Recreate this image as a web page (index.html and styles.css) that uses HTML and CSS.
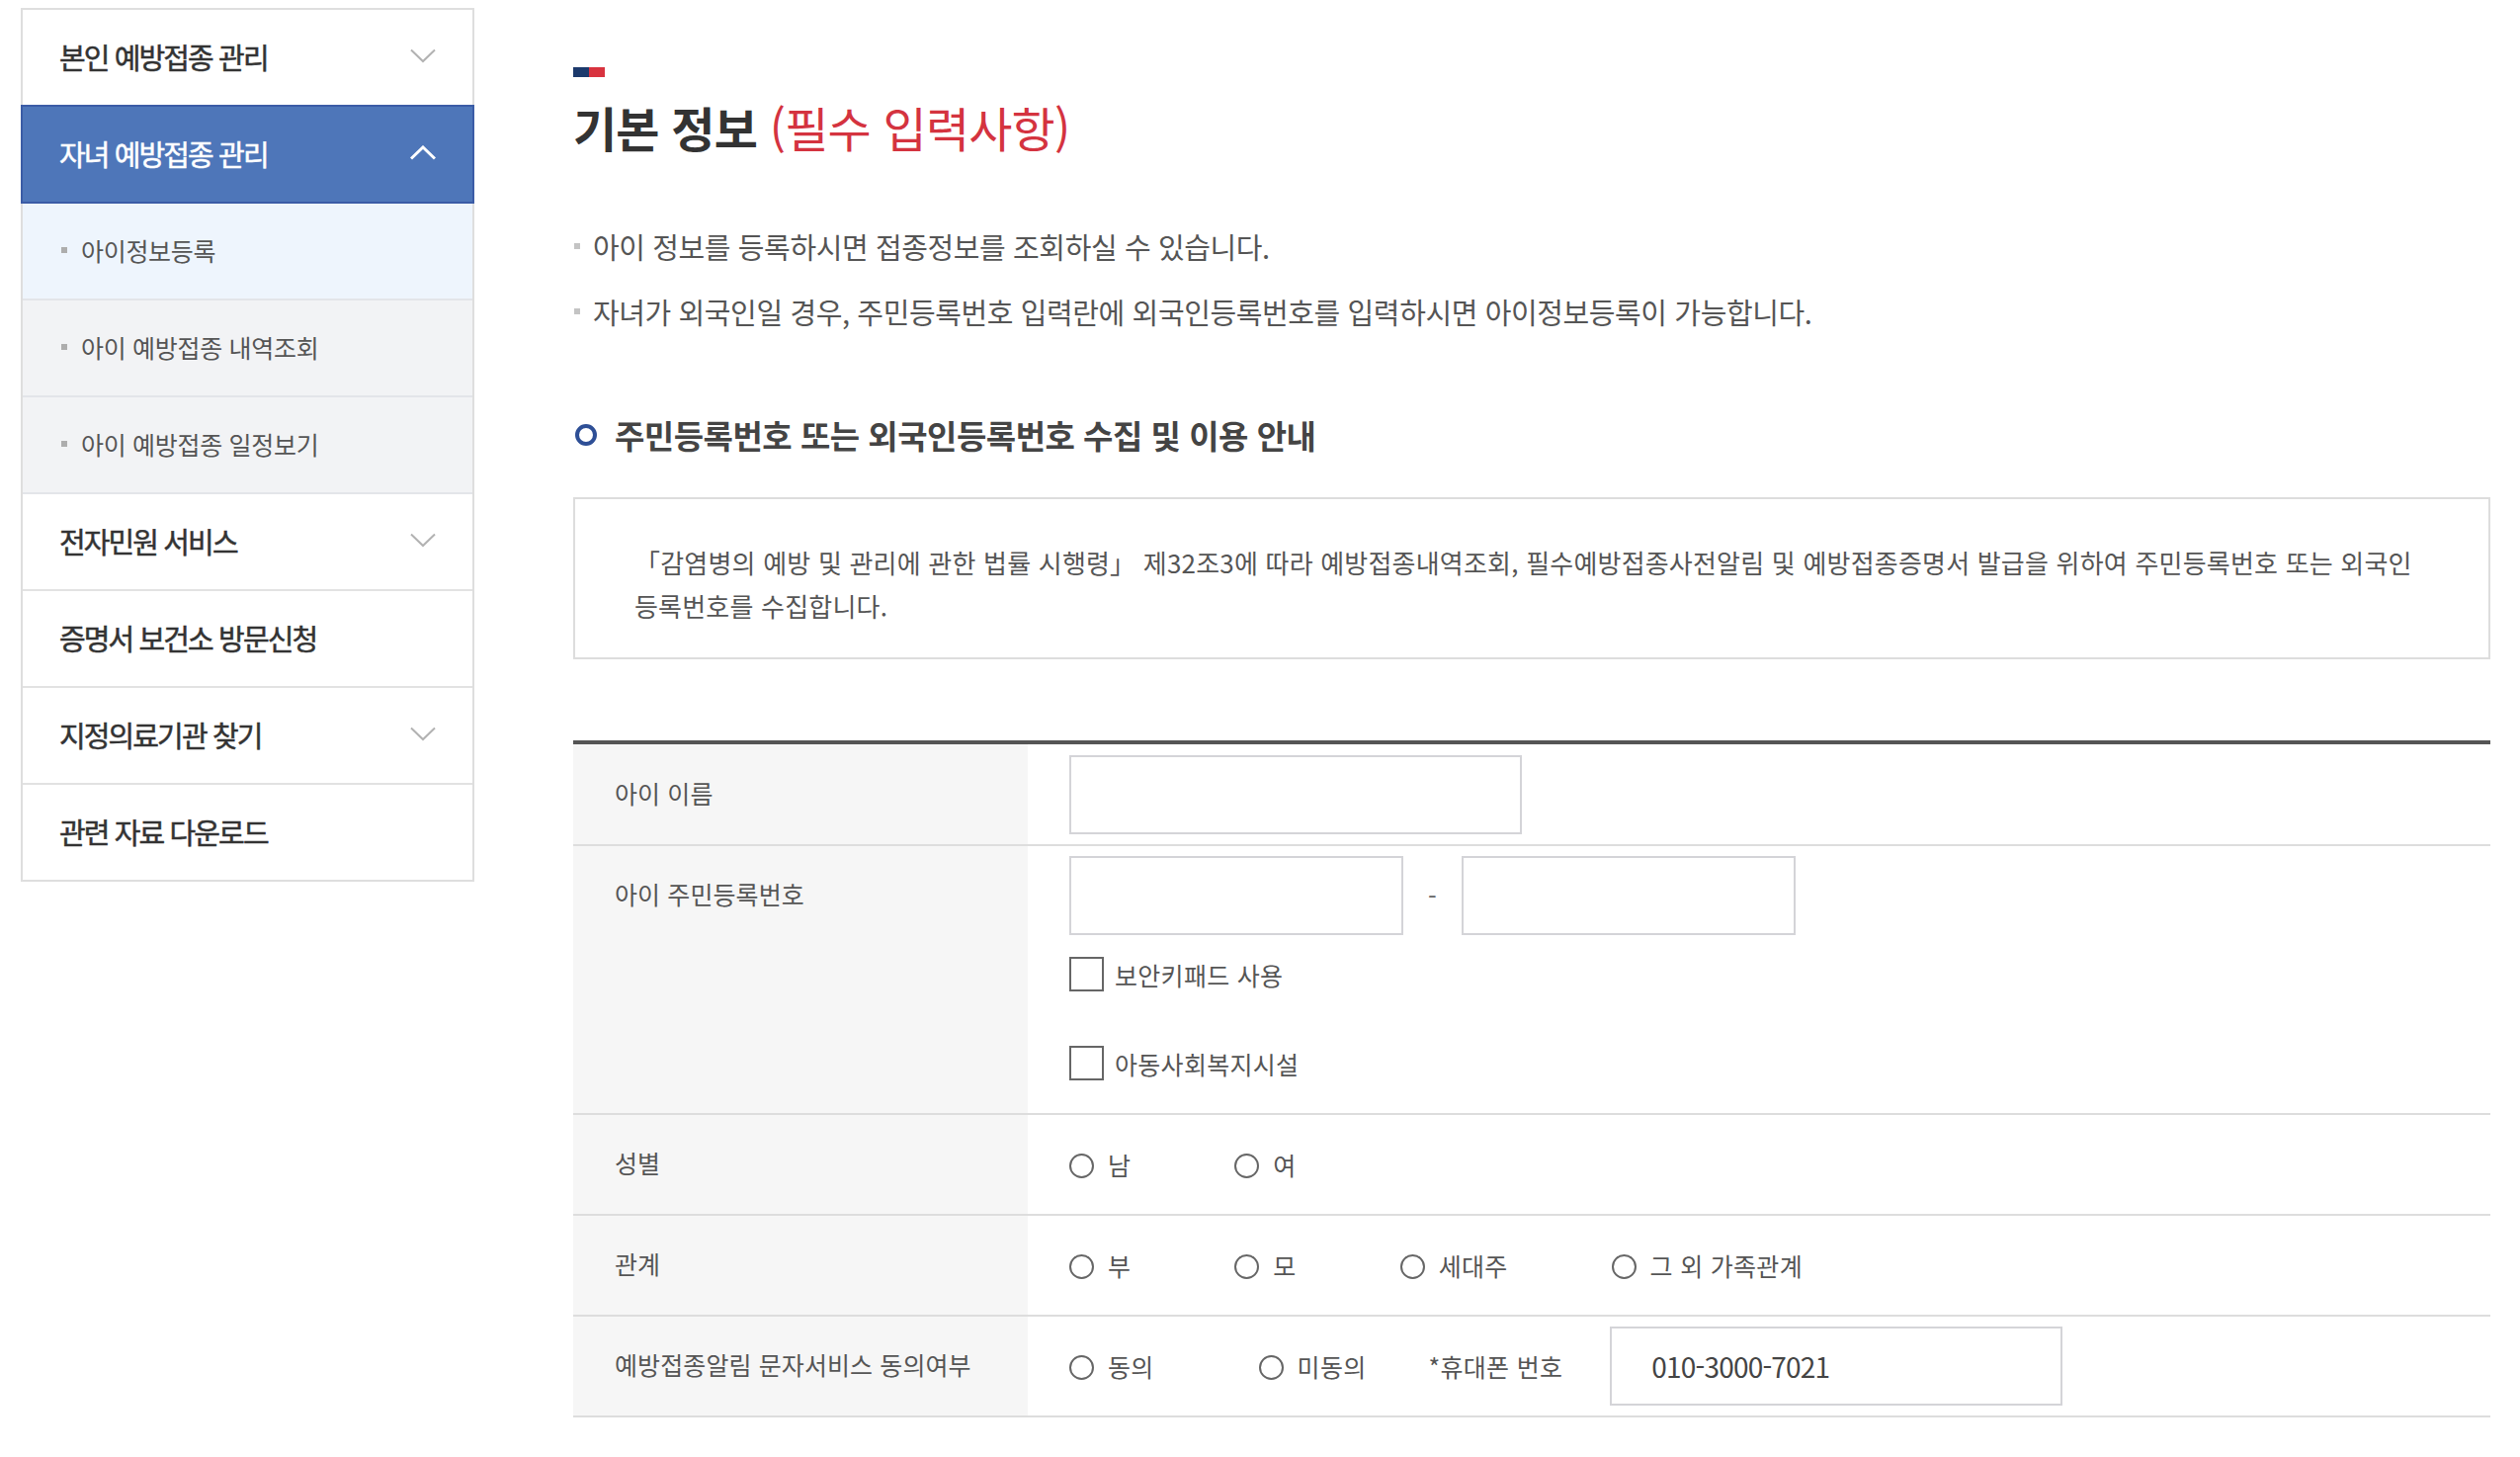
FILE: index.html
```html
<!DOCTYPE html>
<html lang="ko">
<head>
<meta charset="utf-8">
<title>기본 정보</title>
<link rel="stylesheet" href="styles.css">
</head>
<body>
<div class="page">
  <nav class="snb">
    <ul class="snb-list">
      <li class="snb-item">
        <a class="snb-row">본인 예방접종 관리<svg class="chev" viewBox="0 0 26 15"><polyline points="1,1.5 13,13 25,1.5"/></svg></a>
      </li>
      <li class="snb-item">
        <a class="snb-row is-active">자녀 예방접종 관리<svg class="chev chev-up" viewBox="0 0 26 15"><polyline points="1,13.5 13,2 25,13.5"/></svg></a>
        <ul class="snb-sub">
          <li class="is-current">아이정보등록</li>
          <li>아이 예방접종 내역조회</li>
          <li>아이 예방접종 일정보기</li>
        </ul>
      </li>
      <li class="snb-item">
        <a class="snb-row">전자민원 서비스<svg class="chev" viewBox="0 0 26 15"><polyline points="1,1.5 13,13 25,1.5"/></svg></a>
      </li>
      <li class="snb-item">
        <a class="snb-row">증명서 보건소 방문신청</a>
      </li>
      <li class="snb-item">
        <a class="snb-row">지정의료기관 찾기<svg class="chev" viewBox="0 0 26 15"><polyline points="1,1.5 13,13 25,1.5"/></svg></a>
      </li>
      <li class="snb-item">
        <a class="snb-row">관련 자료 다운로드</a>
      </li>
    </ul>
  </nav>

  <main class="content">
    <div class="title-bar"><span></span><span></span></div>
    <h2 class="page-title">기본 정보 <span class="req">(필수 입력사항)</span></h2>

    <ul class="notice">
      <li>아이 정보를 등록하시면 접종정보를 조회하실 수 있습니다.</li>
      <li>자녀가 외국인일 경우, 주민등록번호 입력란에 외국인등록번호를 입력하시면 아이정보등록이 가능합니다.</li>
    </ul>

    <h3 class="sec-title">주민등록번호 또는 외국인등록번호 수집 및 이용 안내</h3>

    <div class="info-box">
      <p>「감염병의 예방 및 관리에 관한 법률 시행령」 제32조3에 따라 예방접종내역조회, 필수예방접종사전알림 및 예방접종증명서 발급을 위하여 주민등록번호 또는 외국인<br>등록번호를 수집합니다.</p>
    </div>

    <div class="form-table">
      <div class="form-row">
        <div class="form-th">아이 이름</div>
        <div class="form-td form-td-first"><input class="inp" type="text" title="아이 이름"></div>
      </div>

      <div class="form-row">
        <div class="form-th form-th-top">아이 주민등록번호</div>
        <div class="form-td form-td-stack">
          <div class="rrn">
            <input class="inp inp-rrn" type="text" title="주민등록번호 앞자리">
            <span class="dash">-</span>
            <input class="inp inp-rrn" type="text" title="주민등록번호 뒷자리">
          </div>
          <label class="chk-line chk-first"><input class="chk" type="checkbox">보안키패드 사용</label>
          <label class="chk-line chk-second"><input class="chk" type="checkbox">아동사회복지시설</label>
        </div>
      </div>

      <div class="form-row">
        <div class="form-th">성별</div>
        <div class="form-td">
          <label class="rd-item"><input class="rd" type="radio" name="sex">남</label>
          <label class="rd-item"><input class="rd" type="radio" name="sex">여</label>
        </div>
      </div>

      <div class="form-row">
        <div class="form-th">관계</div>
        <div class="form-td">
          <label class="rd-item"><input class="rd" type="radio" name="rel">부</label>
          <label class="rd-item"><input class="rd" type="radio" name="rel">모</label>
          <label class="rd-item"><input class="rd" type="radio" name="rel">세대주</label>
          <label class="rd-item"><input class="rd" type="radio" name="rel">그 외 가족관계</label>
        </div>
      </div>

      <div class="form-row">
        <div class="form-th">예방접종알림 문자서비스 동의여부</div>
        <div class="form-td">
          <label class="rd-item rd-wide"><input class="rd" type="radio" name="sms">동의</label>
          <label class="rd-item rd-last"><input class="rd" type="radio" name="sms">미동의</label>
          <span class="phone-label">*휴대폰 번호</span>
          <input class="inp inp-phone" type="text" value="010-3000-7021" title="휴대폰 번호">
        </div>
      </div>
    </div>
  </main>
</div>
</body>
</html>
```

FILE: styles.css
```css
*,
*::before,
*::after {
  box-sizing: border-box;
  margin: 0;
  padding: 0;
}

body {
  font-family: "Noto Sans CJK KR", "Noto Sans", sans-serif;
  color: #555;
  background: #fff;
}

ul {
  list-style: none;
}

.page {
  display: flex;
  align-items: flex-start;
  gap: 100px;
  padding: 8px 0 0 21px;
}

/* ---------- side navigation ---------- */
.snb {
  width: 459px;
  flex: none;
}

.snb-list {
  border: 2px solid #dedede;
}

.snb-row {
  display: flex;
  align-items: center;
  justify-content: space-between;
  height: 98px;
  padding: 0 37px 3px;
  border-bottom: 2px solid #e2e2e2;
  background: #fff;
  font-size: 29px;
  font-weight: 400;
  letter-spacing: -1.9px;
  -webkit-text-stroke: 0.5px currentColor;
  color: #333;
  text-decoration: none;
}

.snb-item:last-child .snb-row {
  border-bottom: 0;
  height: 96px;
}

.snb-row.is-active {
  margin: -2px -2px 0;
  height: 100px;
  border: 2px solid #3b5ca6;
  background: #4e76b9;
  color: #fff;
}

.chev {
  width: 26px;
  height: 15px;
  flex: none;
  fill: none;
  stroke: #b2b2b2;
  stroke-width: 2;
}

.chev-up {
  stroke: #fff;
  stroke-width: 3;
}

.snb-sub li {
  display: flex;
  align-items: center;
  height: 98px;
  padding: 0 0 2px 39px;
  border-bottom: 2px solid #e3e5e9;
  background: #f2f3f5;
  font-size: 25px;
  letter-spacing: -0.3px;
  color: #555;
}

.snb-sub li::before {
  content: "";
  width: 6px;
  height: 6px;
  margin-right: 14px;
  background: #adadad;
}

.snb-sub li.is-current {
  background: #eef5fd;
}

/* ---------- content ---------- */
.content {
  width: 1940px;
  flex: none;
  padding-top: 60px;
}

.title-bar {
  display: flex;
  width: 32px;
  height: 10px;
}

.title-bar span {
  flex: 1;
  background: #1c3a6c;
}

.title-bar span + span {
  background: #d8333f;
}

.page-title {
  margin-top: 20px;
  font-size: 48px;
  line-height: 60px;
  font-weight: 700;
  letter-spacing: -0.8px;
  color: #333;
}

.page-title .req {
  font-weight: 400;
  color: #d4333f;
}

.notice {
  margin-top: 71px;
}

.notice li {
  display: flex;
  align-items: center;
  font-size: 29px;
  line-height: 40px;
  letter-spacing: -0.4px;
  color: #555;
}

.notice li + li {
  margin-top: 26px;
}

.notice li::before {
  content: "";
  width: 6px;
  height: 6px;
  margin: 0 13px 0 1px;
  background: #c4c4c4;
}

.sec-title {
  display: flex;
  align-items: center;
  margin-top: 85px;
  font-size: 33px;
  line-height: 40px;
  font-weight: 700;
  letter-spacing: -0.5px;
  color: #444;
}

.sec-title::before {
  content: "";
  width: 22px;
  height: 22px;
  margin: 0 18px 0 2px;
  border: 4px solid #2e4f96;
  border-radius: 50%;
}

.info-box {
  margin-top: 43px;
  padding: 42px 60px 30px;
  border: 2px solid #dddddd;
  font-size: 26px;
  line-height: 44px;
  letter-spacing: 0.2px;
  color: #555;
  word-break: keep-all;
}

/* ---------- form table ---------- */
.form-table {
  margin-top: 82px;
  border-top: 4px solid #555;
}

.form-row {
  display: grid;
  grid-template-columns: 460px 1fr;
  border-bottom: 2px solid #dddddd;
}

.form-th {
  display: flex;
  align-items: center;
  padding: 0 0 4px 42px;
  background: #f6f6f6;
  font-size: 25px;
  line-height: 40px;
  letter-spacing: 0.1px;
  color: #555;
}

.form-th-top {
  align-items: flex-start;
  padding-top: 28px;
}

.form-td {
  display: flex;
  align-items: center;
  min-height: 100px;
  padding-left: 42px;
  font-size: 25px;
  letter-spacing: 0.3px;
  color: #555;
}

.form-td-first {
  min-height: 101px;
}

.form-td-stack {
  flex-direction: column;
  align-items: flex-start;
  padding-top: 10px;
  padding-bottom: 33px;
}

.inp {
  width: 458px;
  height: 80px;
  border: 2px solid #d4d4d8;
  background: #fff;
  font: inherit;
  letter-spacing: inherit;
  color: #444;
  outline: none;
}

.rrn {
  display: flex;
  align-items: center;
}

.inp-rrn {
  width: 338px;
}

.dash {
  width: 59px;
  text-align: center;
  color: #666;
}

.chk-line {
  display: flex;
  align-items: center;
  height: 35px;
}

.chk-first {
  margin-top: 22px;
}

.chk-second {
  margin-top: 55px;
}

.chk {
  appearance: none;
  width: 35px;
  height: 35px;
  margin-right: 11px;
  border: 2px solid #666;
  background: #fff;
}

.rd-item {
  display: flex;
  align-items: center;
  margin-right: 105px;
  white-space: nowrap;
}

.rd-wide {
  margin-right: 106px;
}

.rd-last {
  margin-right: 63px;
}

.rd {
  appearance: none;
  width: 25px;
  height: 25px;
  margin: 3px 14px 0 0;
  border: 2px solid #666;
  border-radius: 50%;
  background: #fff;
}

.phone-label {
  margin-right: 48px;
  white-space: nowrap;
}

.inp-phone {
  padding-left: 40px;
  font-size: 28px;
  letter-spacing: -0.8px;
}
```
